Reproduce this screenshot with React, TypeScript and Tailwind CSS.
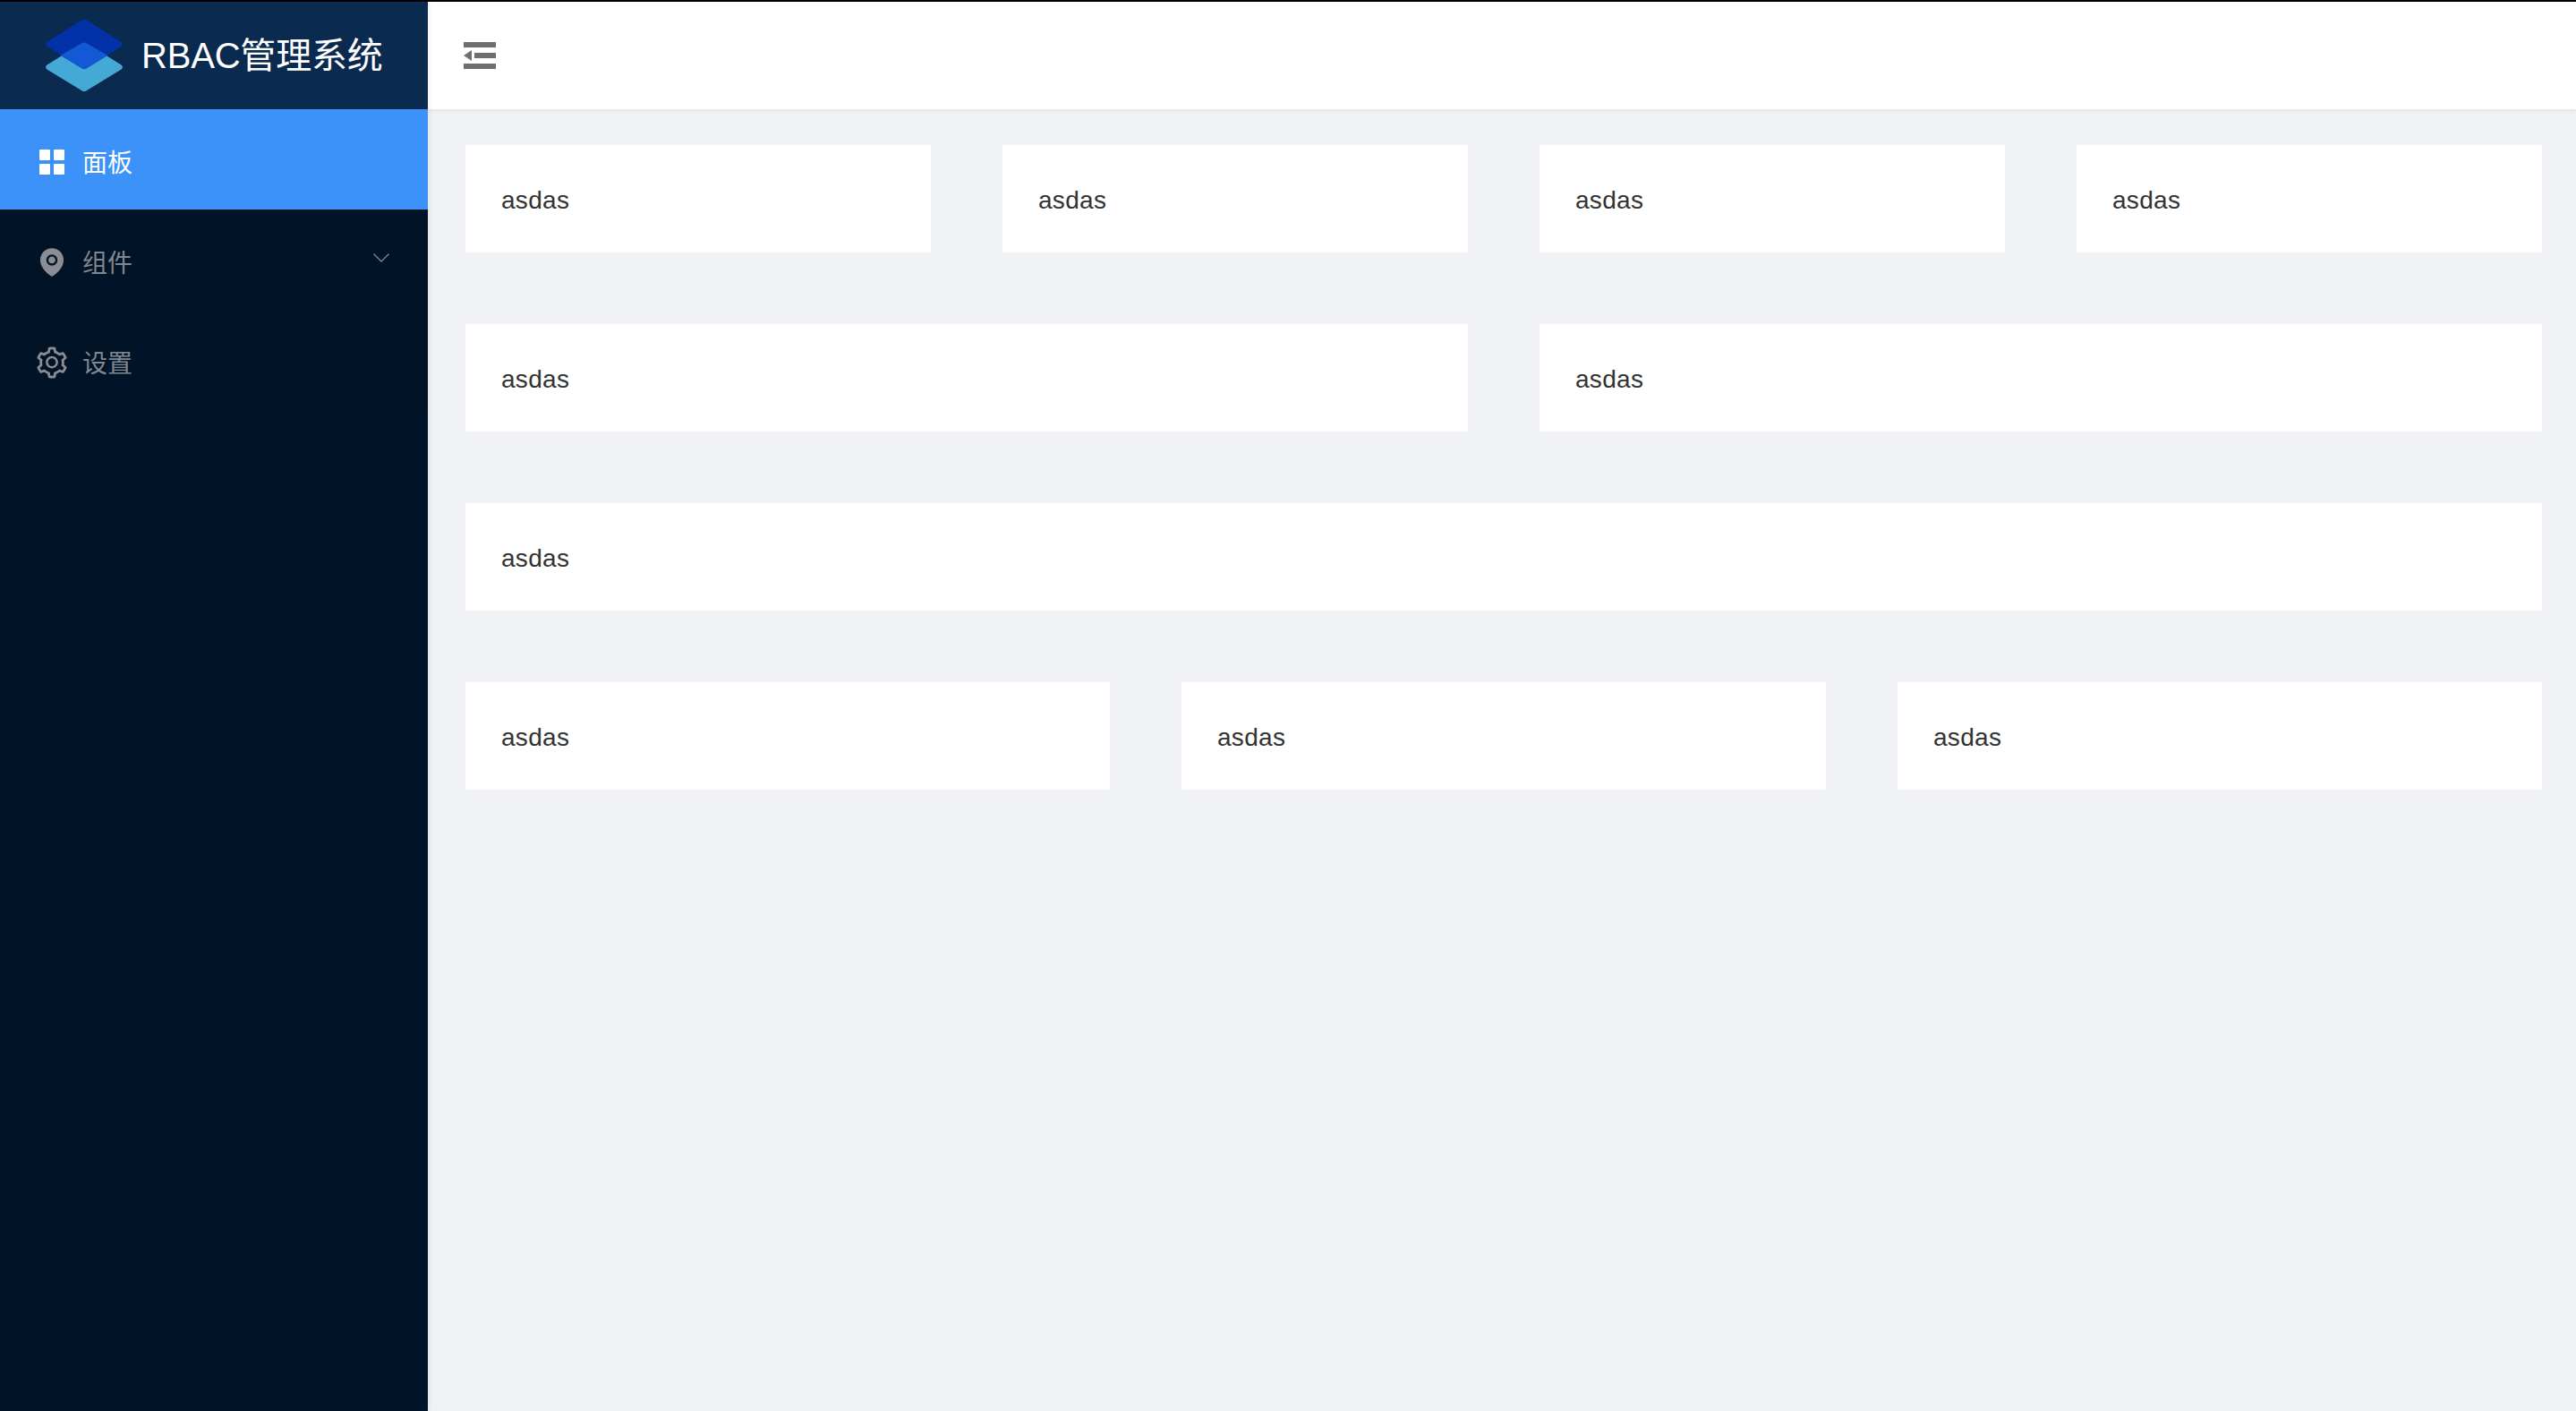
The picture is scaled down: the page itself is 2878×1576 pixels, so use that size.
import { AiFillEnvironment, AiOutlineSetting } from "react-icons/ai";

const sans = "font-['Liberation_Sans','Noto_Sans_CJK_SC',sans-serif]";

function Card() {
  return (
    <div className="flex h-[120px] min-w-0 flex-1 items-center bg-white px-10 pt-[3px] text-[28px] tracking-[0.3px] text-[#333333]">
      asdas
    </div>
  );
}

function Row({ n }: { n: number }) {
  return (
    <div className="flex gap-20">
      {Array.from({ length: n }).map((_, i) => (
        <Card key={i} />
      ))}
    </div>
  );
}

function Logo() {
  return (
    <svg width="88" height="80" viewBox="0 0 88 80" className="shrink-0">
      <path d="M41 26.5a5 5 0 0 1 6 0L85.500 50.500a3 3 0 0 1 0 5L47 79a5 5 0 0 1-6 0L2.500 55.500a3 3 0 0 1 0-5Z" fill="#45a9d6" />
      <path d="M41 .5a5 5 0 0 1 6 0L85.500 25a3 3 0 0 1 0 5L47 54a5 5 0 0 1-6 0L2.500 30a3 3 0 0 1 0-5Z" fill="#0231a8" />
      <path d="M41 26.500a5 5 0 0 1 6 0L70.500 40 47 54a5 5 0 0 1-6 0L17.500 40Z" fill="#1359d6" />
    </svg>
  );
}

export default function App() {
  return (
    <div className={`flex h-screen flex-col overflow-hidden bg-[#f0f2f5] ${sans}`}>
      <div className="h-[2px] shrink-0 bg-black" />
      <div className="flex min-h-0 flex-1">
        <aside className="relative z-10 flex w-[478px] shrink-0 flex-col bg-[#001529] shadow-[2px_0_6px_rgba(0,21,41,0.06)]">
          <div className="flex h-[120px] shrink-0 items-center gap-[20px] bg-[#0a2a4f] pl-[50px] text-[40px] tracking-[-0.2px] text-white">
            <Logo />
            <span>RBAC管理系统</span>
          </div>
          <nav className="bg-[#011326] text-[28px] text-[#7f8790]">
            <div className="flex h-[112px] items-center bg-[#3c92f8] pl-[44px] pt-[5px] text-white">
              <svg width="28" height="28" viewBox="0 0 28 28" className="mr-[20px] shrink-0" fill="#ffffff">
                <rect x="0" y="0" width="12" height="12" rx="1" />
                <rect x="16" y="0" width="12" height="12" rx="1" />
                <rect x="0" y="16" width="12" height="12" rx="1" />
                <rect x="16" y="16" width="12" height="12" rx="1" />
              </svg>
              <span className="mt-[5px]">面板</span>
            </div>
            <div className="flex h-[112px] items-center justify-between pl-[44px] pr-[43px] pt-[5px]">
              <div className="flex items-center">
                <AiFillEnvironment size={36} className="-mx-1 mr-[16px] shrink-0" color="#8a8d93" />
                <span className="mt-[5px]">组件</span>
              </div>
              <svg width="18" height="10" viewBox="0 0 18 10" className="mb-[9px]" fill="none" stroke="#7f8790" strokeWidth="1.300">
                <path d="M.5.5 9 9l8.500-8.500" />
              </svg>
            </div>
            <div className="flex h-[112px] items-center pl-[38px] pt-[5px]">
              <AiOutlineSetting size={40} className="mr-[14px] shrink-0" color="#8a8d93" />
              <span className="mt-[5px]">设置</span>
            </div>
          </nav>
        </aside>
        <div className="flex min-w-0 flex-1 flex-col">
          <header className="flex h-[120px] shrink-0 items-center bg-white pl-[40px] shadow-[0_2px_4px_rgba(0,0,0,0.06)]">
            <svg width="36" height="30" viewBox="0 0 36 30" fill="#6e6e6e">
              <rect x="0" y="0" width="36" height="6" />
              <rect x="12" y="12" width="24" height="6" />
              <rect x="0" y="24" width="36" height="6" />
              <path d="M9 9v12L0 15Z" />
            </svg>
          </header>
          <main className="flex flex-col gap-20 pl-[42px] pr-[38px] pt-10">
            <Row n={4} />
            <Row n={2} />
            <Row n={1} />
            <Row n={3} />
          </main>
        </div>
      </div>
    </div>
  );
}
